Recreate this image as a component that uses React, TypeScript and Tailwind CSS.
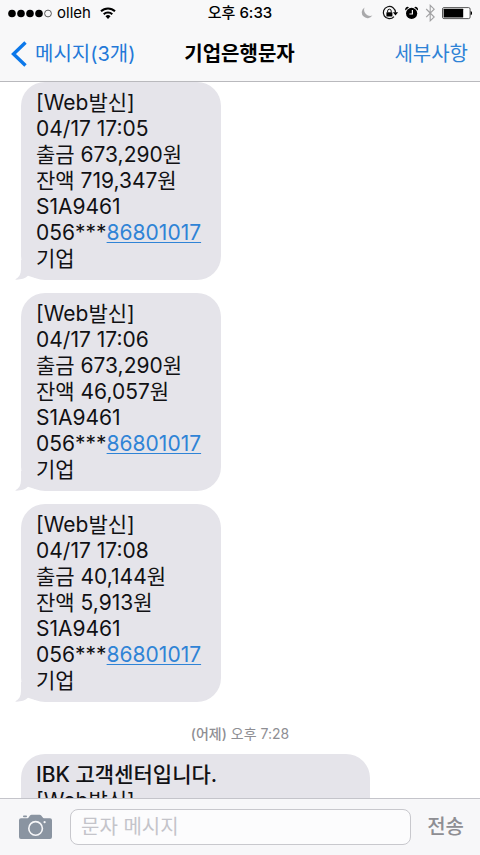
import React, { useState } from 'react';

interface BankMessage {
  id: number;
  lines: string[];
}

const messages: BankMessage[] = [
  { id: 1, lines: ['[Web발신]', '04/17 17:05', '출금 673,290원', '잔액 719,347원', 'S1A9461'] },
  { id: 2, lines: ['[Web발신]', '04/17 17:06', '출금 673,290원', '잔액 46,057원', 'S1A9461'] },
  { id: 3, lines: ['[Web발신]', '04/17 17:08', '출금 40,144원', '잔액 5,913원', 'S1A9461'] },
];

function StatusBar() {
  return (
    <div className="grid grid-cols-3 items-center h-[26px] px-2 text-[15px] leading-5 text-black">
      <div className="flex items-center gap-[5px]">
        <svg width="44" height="9" viewBox="0 0 44 9" aria-hidden="true">
          <circle cx="4" cy="4.5" r="3.8" />
          <circle cx="13" cy="4.5" r="3.8" />
          <circle cx="22" cy="4.5" r="3.8" />
          <circle cx="31" cy="4.5" r="3.8" />
          <circle cx="40" cy="4.5" r="3.4" fill="none" stroke="#333" strokeWidth="0.8" />
        </svg>
        <span>olleh</span>
        <svg className="ml-1" width="16" height="12" viewBox="0 0 16 12" aria-hidden="true">
          <g fill="none" stroke="#000" strokeWidth="2">
            <path d="M1 4.3a10 10 0 0 1 14 0" />
            <path d="M3.7 7.2a6.2 6.2 0 0 1 8.6 0" />
          </g>
          <path d="M8 12 5.5 9.3a3.6 3.6 0 0 1 5 0z" />
        </svg>
      </div>
      <div className="text-center font-medium">오후 6:33</div>
      <div className="flex items-center justify-end">
        <svg width="112" height="18" viewBox="0 0 112 18" aria-hidden="true">
          {/* do not disturb */}
          <path d="M4.6 3.4a5.8 5.8 0 1 0 7.8 8.2A6.2 6.2 0 0 1 4.6 3.4z" fill="#a9a9ab" />
          {/* rotation lock */}
          <path d="M34 12.6a6.1 6.1 0 1 1 1.5-4" fill="none" stroke="#111" strokeWidth="1.2" />
          <path d="M32.9 8.2h5.2l-2.6 3.2z" />
          <rect x="26.4" y="8.2" width="6" height="4.2" rx="0.5" />
          <path d="M27.6 8.4V7a1.8 1.8 0 0 1 3.6 0v1.4" fill="none" stroke="#111" strokeWidth="1" />
          {/* alarm */}
          <circle cx="51.6" cy="9.4" r="5.6" />
          <path d="M45.4 6.6a2.6 2.6 0 0 1 3.6-3.4zM57.8 6.6a2.6 2.6 0 0 0-3.6-3.4z" />
          <path d="M52.4 6v4h-3" fill="none" stroke="#f8f8f8" strokeWidth="1.2" />
          {/* bluetooth */}
          <path d="M66.2 5l8 8-4 3.8V1.4l4 3.8-8 8" fill="none" stroke="#a0a0a2" strokeWidth="1.1" />
          {/* battery */}
          <rect x="82.5" y="3.6" width="27.6" height="11" rx="1.5" fill="#fff" stroke="#444" strokeWidth="0.9" />
          <rect x="83.6" y="4.7" width="19.6" height="8.8" rx="0.5" />
          <path d="M110.6 7a2.2 2.2 0 0 1 0 4.2z" />
        </svg>
      </div>
    </div>
  );
}

function BubbleTail() {
  return (
    <svg className="absolute bottom-0 -left-1.5 text-[#e5e4ea]" width="20" height="20" viewBox="0 0 20 20" aria-hidden="true">
      <path d="M6 0v9C6 14 4 17.5 0 19.6c5 .3 10-.8 13-3.8L20 18V0z" fill="currentColor" />
    </svg>
  );
}

function Bubble({ message }: { message: BankMessage }) {
  return (
    <div className="relative w-[200px] rounded-[24px] bg-[#e5e4ea] px-[15px] py-2">
      <BubbleTail />
      <div className="relative">
        {message.lines.map((line) => (
          <p key={line}>{line}</p>
        ))}
        <p>
          056***
          <a href="tel:86801017" className="text-[#2f83d6] underline decoration-1 underline-offset-2">
            86801017
          </a>
        </p>
        <p>기업</p>
      </div>
    </div>
  );
}

export default function App() {
  const [text, setText] = useState('');

  return (
    <div className="flex h-screen flex-col overflow-hidden bg-white font-['Inter','Noto_Sans_CJK_KR',sans-serif] text-[#111114]">
      <header className="shrink-0 border-b border-[#b9b9bd] bg-[#f8f8f9]">
        <StatusBar />
        <nav className="grid h-[55px] grid-cols-[1fr_auto_1fr] items-center pr-3 pl-[11px] text-[20px] leading-[26px]">
          <button type="button" className="flex items-center gap-2 text-[#2479d8]">
            <svg width="16" height="26" viewBox="0 0 16 26" aria-hidden="true">
              <path d="M14.5 1.5 2.5 13l12 11.5" fill="none" stroke="#0c78ea" strokeWidth="3.4" />
            </svg>
            메시지(3개)
          </button>
          <h1 className="font-semibold text-black">기업은행문자</h1>
          <button type="button" className="justify-self-end text-[#2f83d6]">
            세부사항
          </button>
        </nav>
      </header>

      <main className="min-h-0 flex-1 overflow-hidden pl-[21px] text-[21px] leading-[26px]">
        <div className="flex flex-col gap-[13px]">
          {messages.map((message) => (
            <Bubble key={message.id} message={message} />
          ))}
        </div>

        <p className="mt-5 mr-[21px] text-center text-[14px] leading-6 text-[#8e8e93]">
          <span className="font-medium">(어제)</span> 오후 7:28
        </p>

        <div className="mt-2 w-[349px] rounded-t-[24px] bg-[#e5e4ea] px-[15px] py-2">
          <p className="font-medium">IBK 고객센터입니다.</p>
          <p>[Web발신]</p>
        </div>
      </main>

      <footer className="flex h-[57px] shrink-0 items-center border-t border-[#c4c4ca] bg-[#f7f7f9] pr-4 pl-[19px]">
        <button type="button" aria-label="카메라">
          <svg width="33" height="26" viewBox="0 0 33 26" aria-hidden="true">
            <path
              d="M2 4.2h29a2 2 0 0 1 2 2V23a2 2 0 0 1-2 2H2a2 2 0 0 1-2-2V6.2a2 2 0 0 1 2-2z"
              fill="#8a94a1"
            />
            <path d="M8.5 5 11 1.6Q11.6.8 12.6.8h8Q21.6.8 22.2 1.6L25 5z" fill="#8a94a1" />
            <rect x="4" y="1.6" width="4" height="1.6" rx="0.8" fill="#8a94a1" />
            <circle cx="16.6" cy="14.4" r="6.8" fill="none" stroke="#f7f7f9" strokeWidth="1.6" />
            <circle cx="25.6" cy="8.2" r="1.1" fill="#f7f7f9" />
          </svg>
        </button>
        <input
          type="text"
          aria-label="문자 메시지"
          placeholder="문자 메시지"
          value={text}
          onChange={(e) => setText(e.target.value)}
          className="ml-[18px] h-9 min-w-0 flex-1 rounded-lg border border-[#c8c8cd] bg-[#fcfcfd] px-[10px] text-[20px] outline-none placeholder:text-[#c4c4ca]"
        />
        <button type="button" className="ml-4 text-[20px] leading-[26px] font-medium text-[#8e8e93]">
          전송
        </button>
      </footer>
    </div>
  );
}
